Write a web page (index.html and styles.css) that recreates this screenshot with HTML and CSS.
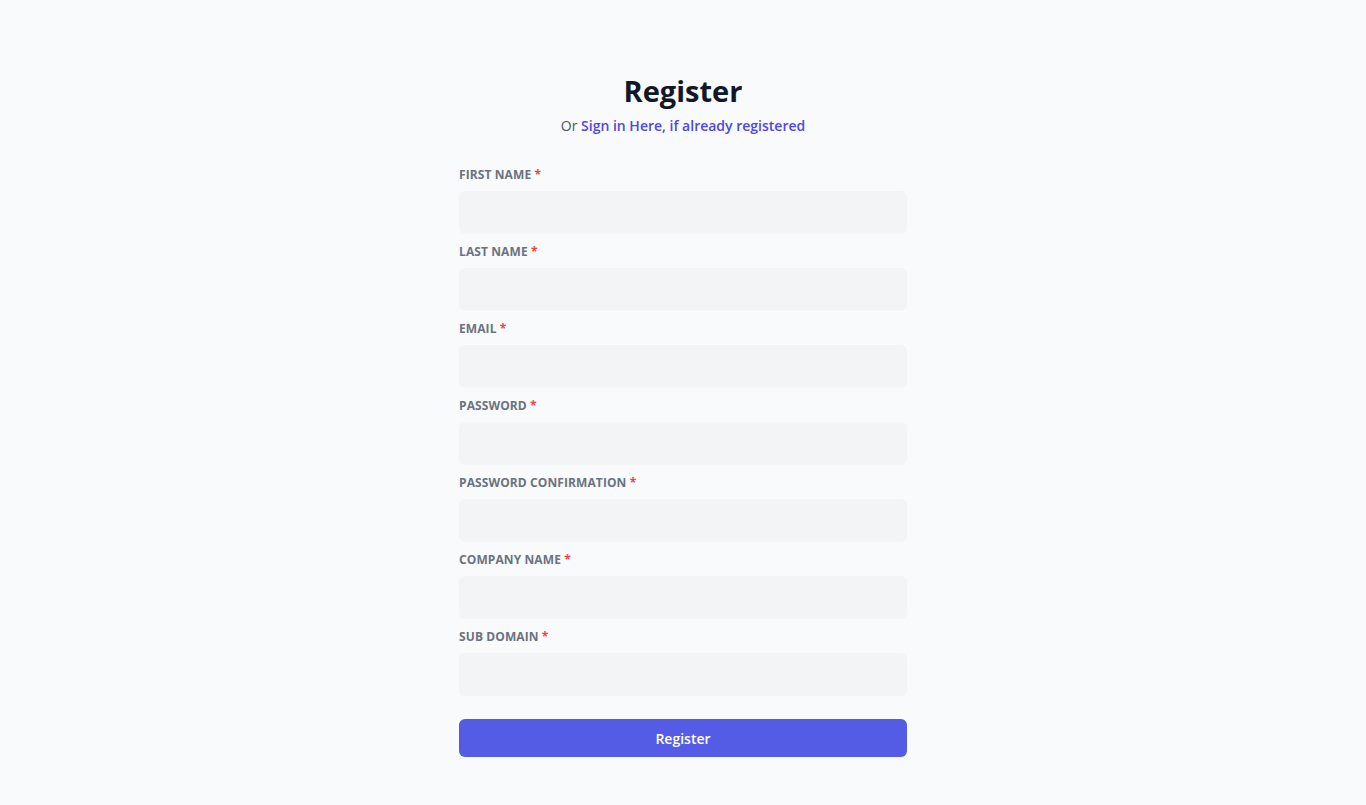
FILE: index.html
```html
<!DOCTYPE html>
<html lang="en">
<head>
<meta charset="utf-8">
<title>Register</title>
<link rel="stylesheet" href="styles.css">
</head>
<body>
<main class="page">
  <div class="card">
    <h1 class="title">Register</h1>
    <p class="subtitle">Or <a href="#" class="link">Sign in Here, if already registered</a></p>
    <form class="form">
      <div class="fields">
        <div class="field"><label class="label">First Name <span class="req">*</span></label><input class="input" type="text"></div>
        <div class="field"><label class="label">Last Name <span class="req">*</span></label><input class="input" type="text"></div>
        <div class="field"><label class="label">Email <span class="req">*</span></label><input class="input" type="email"></div>
        <div class="field"><label class="label">Password <span class="req">*</span></label><input class="input" type="password"></div>
        <div class="field"><label class="label">Password Confirmation <span class="req">*</span></label><input class="input" type="password"></div>
        <div class="field"><label class="label">Company Name <span class="req">*</span></label><input class="input" type="text"></div>
        <div class="field"><label class="label">Sub Domain <span class="req">*</span></label><input class="input" type="text"></div>
      </div>
      <button class="btn" type="button">Register</button>
    </form>
  </div>
</main>
</body>
</html>
```
FILE: styles.css
```css
* { box-sizing: border-box; }
html, body { margin: 0; padding: 0; }
body {
  background: #f8fafc;
  font-family: "Open Sans", "Noto Sans", "Liberation Sans", sans-serif;
  color: #111827;
}
.page {
  display: flex;
  justify-content: center;
  padding-top: 71px;
}
.card {
  width: 448px;
  display: flex;
  flex-direction: column;
}
.title {
  margin: 0;
  text-align: center;
  font-size: 29px;
  line-height: 40px;
  font-weight: 700;
  color: #111827;
}
.subtitle {
  margin: 5px 0 0;
  text-align: center;
  font-size: 14px;
  line-height: 20px;
  color: #4b5563;
}
.link {
  color: #4f46e5;
  font-weight: 600;
  text-decoration: none;
}
.form {
  margin-top: 26px;
  display: flex;
  flex-direction: column;
}
.fields {
  display: flex;
  flex-direction: column;
  background: #f9fafb;
  box-shadow: 0 1px 2px rgba(0,0,0,0.02);
  border-radius: 6px;
}
.field {
  display: flex;
  flex-direction: column;
  padding-top: 5px;
}
.label {
  font-size: 12px;
  line-height: 16px;
  font-weight: 700;
  text-transform: uppercase;
  color: #6b7280;
  margin-bottom: 8px;
  letter-spacing: 0.1px;
}
.req { color: #ef4444; }
.input {
  height: 42px;
  border: none;
  border-radius: 6px;
  background: #f3f4f6;
  font: inherit;
  padding: 0 12px;
  box-shadow: 0 1px 1px rgba(0,0,0,0.02);
}
.field + .field { margin-top: 6px; }
.btn {
  margin-top: 24px;
  height: 38px;
  border: none;
  border-radius: 6px;
  background: #545ce6;
  color: #ffffff;
  font-family: inherit;
  font-size: 14px;
  font-weight: 600;
  cursor: pointer;
}
```
